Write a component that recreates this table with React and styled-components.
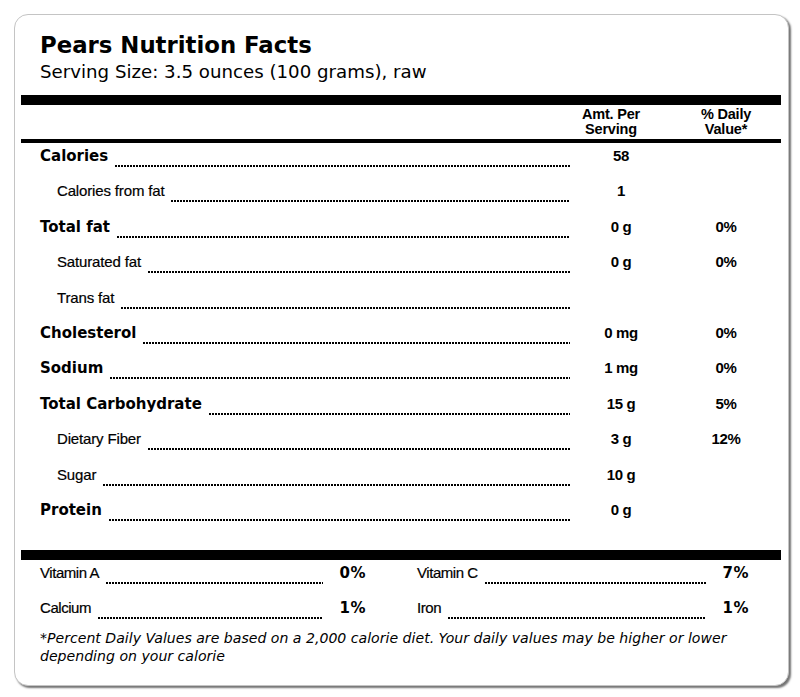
import React from 'react';
import styled, {createGlobalStyle, css} from 'styled-components';

const GlobalStyle = createGlobalStyle`
body {
    margin: 0;
    background: #ffffff;
}
`

const Page = styled.div`
    padding: 14px;
`

const Card = styled.div`
    width: 775px;
    height: 672px;
    box-sizing: border-box;
    border: 1px solid #c4c4c4;
    border-radius: 14px;
    box-shadow: 2px 2px 2px rgba(0, 0, 0, 0.55);
    padding: 0 7px 0 6px;
    background: #ffffff;
    color: #000000;
`

const Header = styled.div`
    padding: 17px 0 0 19px;
`

const Title = styled.h1`
    margin: 0;
    font-family: "DejaVu Sans", Verdana, sans-serif;
    font-weight: bold;
    font-size: 22.8px;
    line-height: 26px;
`

const Serving = styled.p`
    margin: 3px 0 0;
    font-family: "DejaVu Sans", Verdana, sans-serif;
    font-size: 18.2px;
    line-height: 22px;
`

const Bar = styled.div`
    height: ${props => props.thin ? '4px' : '10px'};
    background: #000000;
    margin-top: ${props => props.gap || 0}px;
`

const Grid = styled.div`
    display: grid;
    grid-template-columns: 550px 100px 110px;
`

const ColumnHeads = styled(Grid)`
    height: 34px;
    box-sizing: border-box;
    padding-top: 2px;
    font-family: "Liberation Sans", Arial, sans-serif;
    font-weight: bold;
    font-size: 14.5px;
    line-height: 14.5px;
    letter-spacing: -0.2px;
    text-align: center;
`

const HeadCell = styled.div`
    grid-column: ${props => props.col};
    padding-right: ${props => props.shift || 0}px;
`

const HeadLine = styled.div`
    white-space: nowrap;
`

const Row = styled(Grid)`
    height: 35.4px;
    box-sizing: border-box;
    padding-top: 5px;
    align-items: start;
`

const LabelCell = styled.div`
    display: flex;
    align-items: flex-start;
    padding-left: ${props => props.sub ? 36 : 19}px;
    padding-right: 1px;
`

const Label = styled.span`
    white-space: nowrap;
    line-height: 16px;
    ${props => props.bold ? css`
        font-family: "DejaVu Sans", Verdana, sans-serif;
        font-weight: bold;
        font-size: 15px;
    ` : css`
        font-family: "Liberation Sans", Arial, sans-serif;
        font-size: 15px;
        -webkit-text-stroke: 0.2px #000000;
        letter-spacing: ${props.tight ? '-0.45px' : '-0.15px'};
    `}
`

const Dots = styled.span`
    flex: 1;
    height: 2px;
    margin: 17px 0 0 7px;
    background-image: linear-gradient(to right, #000000 2px, transparent 2px);
    background-size: 3px 2px;
    background-repeat: repeat-x;
`

const Value = styled.div`
    text-align: center;
    font-family: "Liberation Sans", Arial, sans-serif;
    font-weight: bold;
    font-size: 15px;
    line-height: 16px;
    letter-spacing: -0.4px;
`

const Vitamins = styled.div`
    display: grid;
    grid-template-columns: 326px 332px;
    column-gap: 51px;
    padding-left: 19px;
`

const VitaminRow = styled.div`
    display: flex;
    align-items: flex-start;
    height: 35px;
    box-sizing: border-box;
    padding-top: 5px;
`

const VitaminPct = styled.span`
    width: 43px;
    text-align: right;
    font-family: "DejaVu Sans", Verdana, sans-serif;
    font-weight: bold;
    font-size: 15px;
    line-height: 16px;
    letter-spacing: 0.5px;
`

const Footnote = styled.p`
    margin: 0;
    padding-left: 19px;
    font-family: "DejaVu Sans", Verdana, sans-serif;
    font-style: italic;
    font-size: 14.1px;
    line-height: 17.5px;
`

const nutrients = [
    {label: 'Calories', bold: true, amt: '58'},
    {label: 'Calories from fat', amt: '1'},
    {label: 'Total fat', bold: true, amt: '0 g', pct: '0%'},
    {label: 'Saturated fat', amt: '0 g', pct: '0%'},
    {label: 'Trans fat'},
    {label: 'Cholesterol', bold: true, amt: '0 mg', pct: '0%'},
    {label: 'Sodium', bold: true, amt: '1 mg', pct: '0%'},
    {label: 'Total Carbohydrate', bold: true, amt: '15 g', pct: '5%'},
    {label: 'Dietary Fiber', amt: '3 g', pct: '12%'},
    {label: 'Sugar', amt: '10 g'},
    {label: 'Protein', bold: true, amt: '0 g'},
]

const vitamins = [
    ['Vitamin A', '0%'],
    ['Vitamin C', '7%'],
    ['Calcium', '1%'],
    ['Iron', '1%'],
]

function App() {
    return (
        <Page>
            <GlobalStyle/>
            <Card>
                <Header>
                    <Title>Pears Nutrition Facts</Title>
                    <Serving>Serving Size: 3.5 ounces (100 grams), raw</Serving>
                </Header>
                <Bar gap={12}/>
                <ColumnHeads>
                    <HeadCell col={2} shift={20}>
                        <HeadLine>Amt. Per</HeadLine>
                        <HeadLine>Serving</HeadLine>
                    </HeadCell>
                    <HeadCell col={3}>
                        <HeadLine>% Daily</HeadLine>
                        <HeadLine>Value*</HeadLine>
                    </HeadCell>
                </ColumnHeads>
                <Bar thin/>
                {nutrients.map(n => (
                    <Row key={n.label}>
                        <LabelCell sub={!n.bold}>
                            <Label bold={n.bold}>{n.label}</Label>
                            <Dots/>
                        </LabelCell>
                        <Value>{n.amt}</Value>
                        <Value>{n.pct}</Value>
                    </Row>
                ))}
                <Bar gap={18}/>
                <Vitamins>
                    {vitamins.map(([name, pct]) => (
                        <VitaminRow key={name}>
                            <Label tight>{name}</Label>
                            <Dots/>
                            <VitaminPct>{pct}</VitaminPct>
                        </VitaminRow>
                    ))}
                </Vitamins>
                <Footnote>
                    *Percent Daily Values are based on a 2,000 calorie diet. Your daily values may be higher or lower depending on your calorie
                </Footnote>
            </Card>
        </Page>
    );
}

export default App;
